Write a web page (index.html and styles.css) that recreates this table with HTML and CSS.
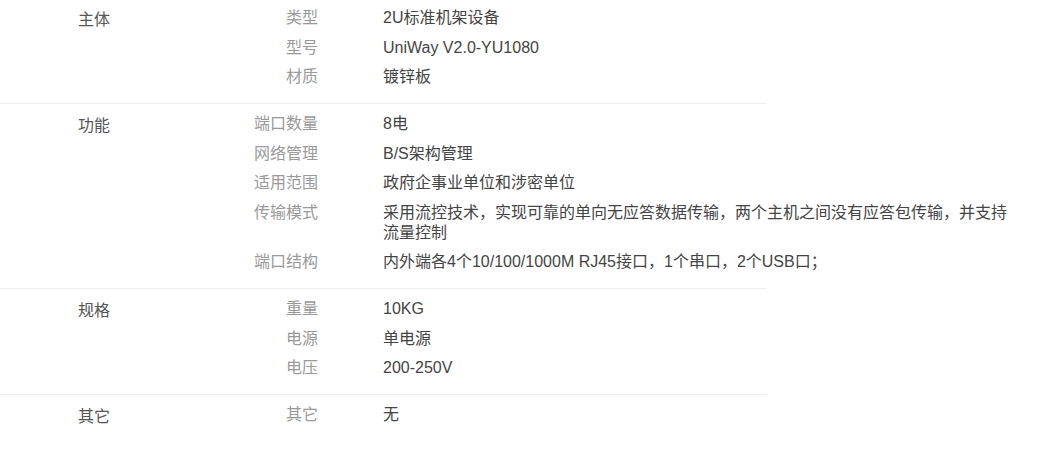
FILE: index.html
```html
<!DOCTYPE html>
<html lang="zh-CN">
<head>
<meta charset="utf-8">
<title>参数</title>
<link rel="stylesheet" href="styles.css">
</head>
<body>
<div class="specs">
  <div class="group first">
    <div class="name">主体</div>
    <div class="items">
      <div class="row"><div class="label">类型</div><div class="value">2U标准机架设备</div></div>
      <div class="row"><div class="label">型号</div><div class="value">UniWay V2.0-YU1080</div></div>
      <div class="row"><div class="label">材质</div><div class="value">镀锌板</div></div>
    </div>
  </div>
  <div class="group">
    <div class="name">功能</div>
    <div class="items">
      <div class="row"><div class="label">端口数量</div><div class="value">8电</div></div>
      <div class="row"><div class="label">网络管理</div><div class="value">B/S架构管理</div></div>
      <div class="row"><div class="label">适用范围</div><div class="value">政府企事业单位和涉密单位</div></div>
      <div class="row"><div class="label">传输模式</div><div class="value">采用流控技术，实现可靠的单向无应答数据传输，两个主机之间没有应答包传输，并支持流量控制</div></div>
      <div class="row"><div class="label">端口结构</div><div class="value">内外端各4个10/100/1000M RJ45接口，1个串口，2个USB口；</div></div>
    </div>
  </div>
  <div class="group">
    <div class="name">规格</div>
    <div class="items">
      <div class="row"><div class="label">重量</div><div class="value">10KG</div></div>
      <div class="row"><div class="label">电源</div><div class="value">单电源</div></div>
      <div class="row"><div class="label">电压</div><div class="value">200-250V</div></div>
    </div>
  </div>
  <div class="group last">
    <div class="name">其它</div>
    <div class="items">
      <div class="row"><div class="label">其它</div><div class="value">无</div></div>
    </div>
  </div>
</div>
</body>
</html>
```

FILE: styles.css
```css
html, body {
  margin: 0;
  padding: 0;
  background: #fff;
}
body {
  font-family: "Liberation Sans", Arial, "Noto Sans CJK SC", sans-serif;
  font-size: 16px;
  line-height: 20px;
}
.specs {
  width: 767px;
}
.group {
  display: flex;
  padding: 10px 0 16px;
  border-bottom: 1px solid #eeeeee;
}
.group.first {
  padding-top: 8px;
}
.group.last {
  border-bottom: none;
}
.name {
  flex: none;
  box-sizing: border-box;
  width: 200px;
  padding-left: 78px;
  padding-top: 2px;
  color: #555;
}
.items {
  flex: none;
  display: flex;
  flex-direction: column;
  gap: 9.5px;
}
.row {
  display: flex;
}
.label {
  flex: none;
  width: 118px;
  text-align: right;
  color: #999;
}
.value {
  flex: none;
  width: 630px;
  margin-left: 65px;
  color: #444;
}
```
